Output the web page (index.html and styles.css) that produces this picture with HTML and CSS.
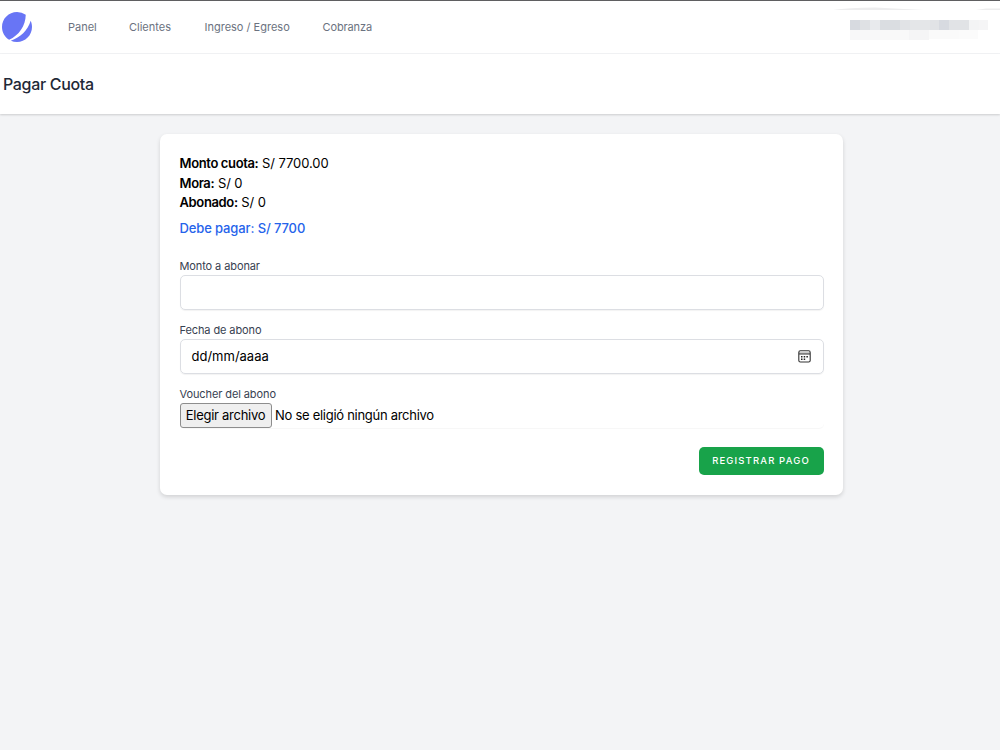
FILE: index.html
```html
<!DOCTYPE html>
<html lang="es">
<head>
<meta charset="utf-8">
<title>Pagar Cuota</title>
<link rel="stylesheet" href="styles.css">
</head>
<body>
<nav class="navbar">
  <svg class="logo" viewBox="0 0 48 48" fill="#6875f5"><path d="M11.395 44.428C4.557 40.198 0 32.632 0 24 0 10.745 10.745 0 24 0a23.891 23.891 0 0113.997 4.502c-.2 17.907-11.097 33.245-26.602 39.926z"/><path d="M14.134 45.885A23.914 23.914 0 0024 48c13.255 0 24-10.745 24-24 0-3.516-.756-6.856-2.115-9.866-4.659 15.143-16.608 27.092-31.75 31.751z"/></svg>
  <div class="links"><a class="panel">Panel</a><a class="clientes">Clientes</a><a class="ingreso">Ingreso / Egreso</a><a class="cobranza">Cobranza</a></div>
  <svg class="account" viewBox="0 0 180 52">
    <path d="M13 9Q28 6.500 55 6.500L104 9H13z" fill="#ededee"/><path d="M156 9L166 7.500H180V9z" fill="#ededee"/>
    <g shape-rendering="crispEdges"><path d="M30 19h10v10h-10z" fill="#d7dae0"/><path d="M40 19h10v10h-10z" fill="#dfe1e4"/><path d="M50 19h10v10h-10z" fill="#e8eaed"/><path d="M60 19h20v10h-20z" fill="#dadde1"/><path d="M80 19h10v10h-10z" fill="#e1e3e6"/><path d="M90 19h20v10h-20z" fill="#e4e6e8"/><path d="M110 19h9v10h-9z" fill="#e1e3e6"/><path d="M119 19h10v10h-10z" fill="#d7dae0"/><path d="M129 19h20v10h-20z" fill="#e1e3e6"/><path d="M149 19h10v10h-10z" fill="#f3f4f5"/><path d="M159 19h9v10h-9z" fill="#f5f5f6"/></g>
    <g shape-rendering="crispEdges"><path d="M30 29h30v10h-30z" fill="#f8f8f9"/><path d="M60 29h29v10h-29z" fill="#f9f9f9"/><path d="M89 29h20v10h-20z" fill="#f5f5f6"/><path d="M109 29h30v9h-30z" fill="#fafafa"/><path d="M139 29h19v9h-19z" fill="#fbfbfb"/></g>
  </svg>
</nav>
<header class="heading"><h1>Pagar Cuota</h1></header>
<main class="card">
  <div class="row"><b>Monto cuota:</b> <span>S/ 7700.00</span></div>
  <div class="row"><b>Mora:</b> <span>S/ 0</span></div>
  <div class="row"><b>Abonado:</b> <span>S/ 0</span></div>
  <div class="due">Debe pagar: S/ 7700</div>
  <label class="first">Monto a abonar</label>
  <div class="field"></div>
  <label>Fecha de abono</label>
  <div class="field"><span>dd/mm/aaaa</span>
    <svg class="calendar" viewBox="0 0 13 13"><path d="M1 2h11v2H1z" fill="#ccc"/><rect x=".8" y=".8" width="11.400" height="11.200" rx="1.600" fill="none" stroke="#333" stroke-width="1.100"/><path d="M1 4h11" stroke="#333"/><path d="M3 6.700h1.500M5.700 6.700h1.500M8.400 6.700h1.500M3 9.200h1.500M5.700 9.200h1.500" stroke="#222" stroke-width="1.400"/></svg>
  </div>
  <label>Voucher del abono</label>
  <div class="file"><span class="choose">Elegir archivo</span><span class="none">No se eligió ningún archivo</span></div>
  <div class="actions"><button class="submit">REGISTRAR PAGO</button></div>
</main>
</body>
</html>
```
FILE: styles.css
```css
* { box-sizing: border-box; }
body { margin: 0; height: 750px; overflow: hidden; background: #f3f4f6; font-family: Inter, sans-serif; font-size: 13px; color: #000; }
.navbar { height: 54px; display: flex; align-items: center; background: #fff; border-top: 1px solid #5f5f61; border-bottom: 1px solid #f3f4f6; padding-left: 2.300px; }
.logo { width: 30px; height: 30px; flex: none; }
.links { display: flex; margin-left: 35.700px; font-size: 11px; color: #6b7280; }
.links a { white-space: nowrap; }
.panel { width: 61px; }
.clientes { width: 75.500px; }
.ingreso { width: 118px; }
.cobranza { letter-spacing: -.12px; }
.account { width: 180px; height: 52px; margin-left: auto; }
.heading { height: 60px; display: flex; align-items: center; padding-left: 3px; background: #fff; box-shadow: 0 1px 2px rgba(0,0,0,.16); }
h1 { margin: 0; font-size: 16px; font-weight: 500; letter-spacing: -.33px; color: #1f2937; }
.card { width: 683px; height: 361px; margin: 20px 0 0 160px; padding: 19px 19.500px 19.500px; background: #fff; border-radius: 7px; box-shadow: 0 2px 4px rgba(0,0,0,.14); }
.row { height: 19.700px; line-height: 20px; white-space: nowrap; }
.row b { font-weight: 600; letter-spacing: -.36px; }
.row span { letter-spacing: -.08px; }
.due { margin-top: 6px; height: 20px; line-height: 20px; font-weight: 500; letter-spacing: -.12px; color: #2563eb; }
label { display: block; height: 17px; line-height: 17px; font-size: 11px; letter-spacing: -.1px; color: #374151; }
.first { margin-top: 19.500px; }
.field { height: 35px; margin-bottom: 12px; padding: 0 11.500px 0 11px; border: 1px solid #dcdee3; border-radius: 5px; box-shadow: 0 1px 1px rgba(0,0,0,.05); display: flex; align-items: center; justify-content: space-between; }
.calendar { width: 13px; height: 13px; }
.file { height: 25px; display: flex; align-items: center; border-radius: 5px; box-shadow: 0 1px 1px rgba(0,0,0,.035); }
.choose { width: 92px; height: 25px; display: flex; align-items: center; justify-content: center; background: #efefef; border: 1px solid #8d8d8d; border-radius: 3px; white-space: nowrap; letter-spacing: -.27px; }
.none { margin-left: 3.500px; letter-spacing: -.28px; }
.actions { display: flex; justify-content: flex-end; margin-top: 19px; }
.submit { width: 125px; height: 28px; padding: 0; border: 0; border-radius: 5px; background: #18a34a; color: #fff; font: 500 9.500px Inter, sans-serif; letter-spacing: 1.150px; }
```
